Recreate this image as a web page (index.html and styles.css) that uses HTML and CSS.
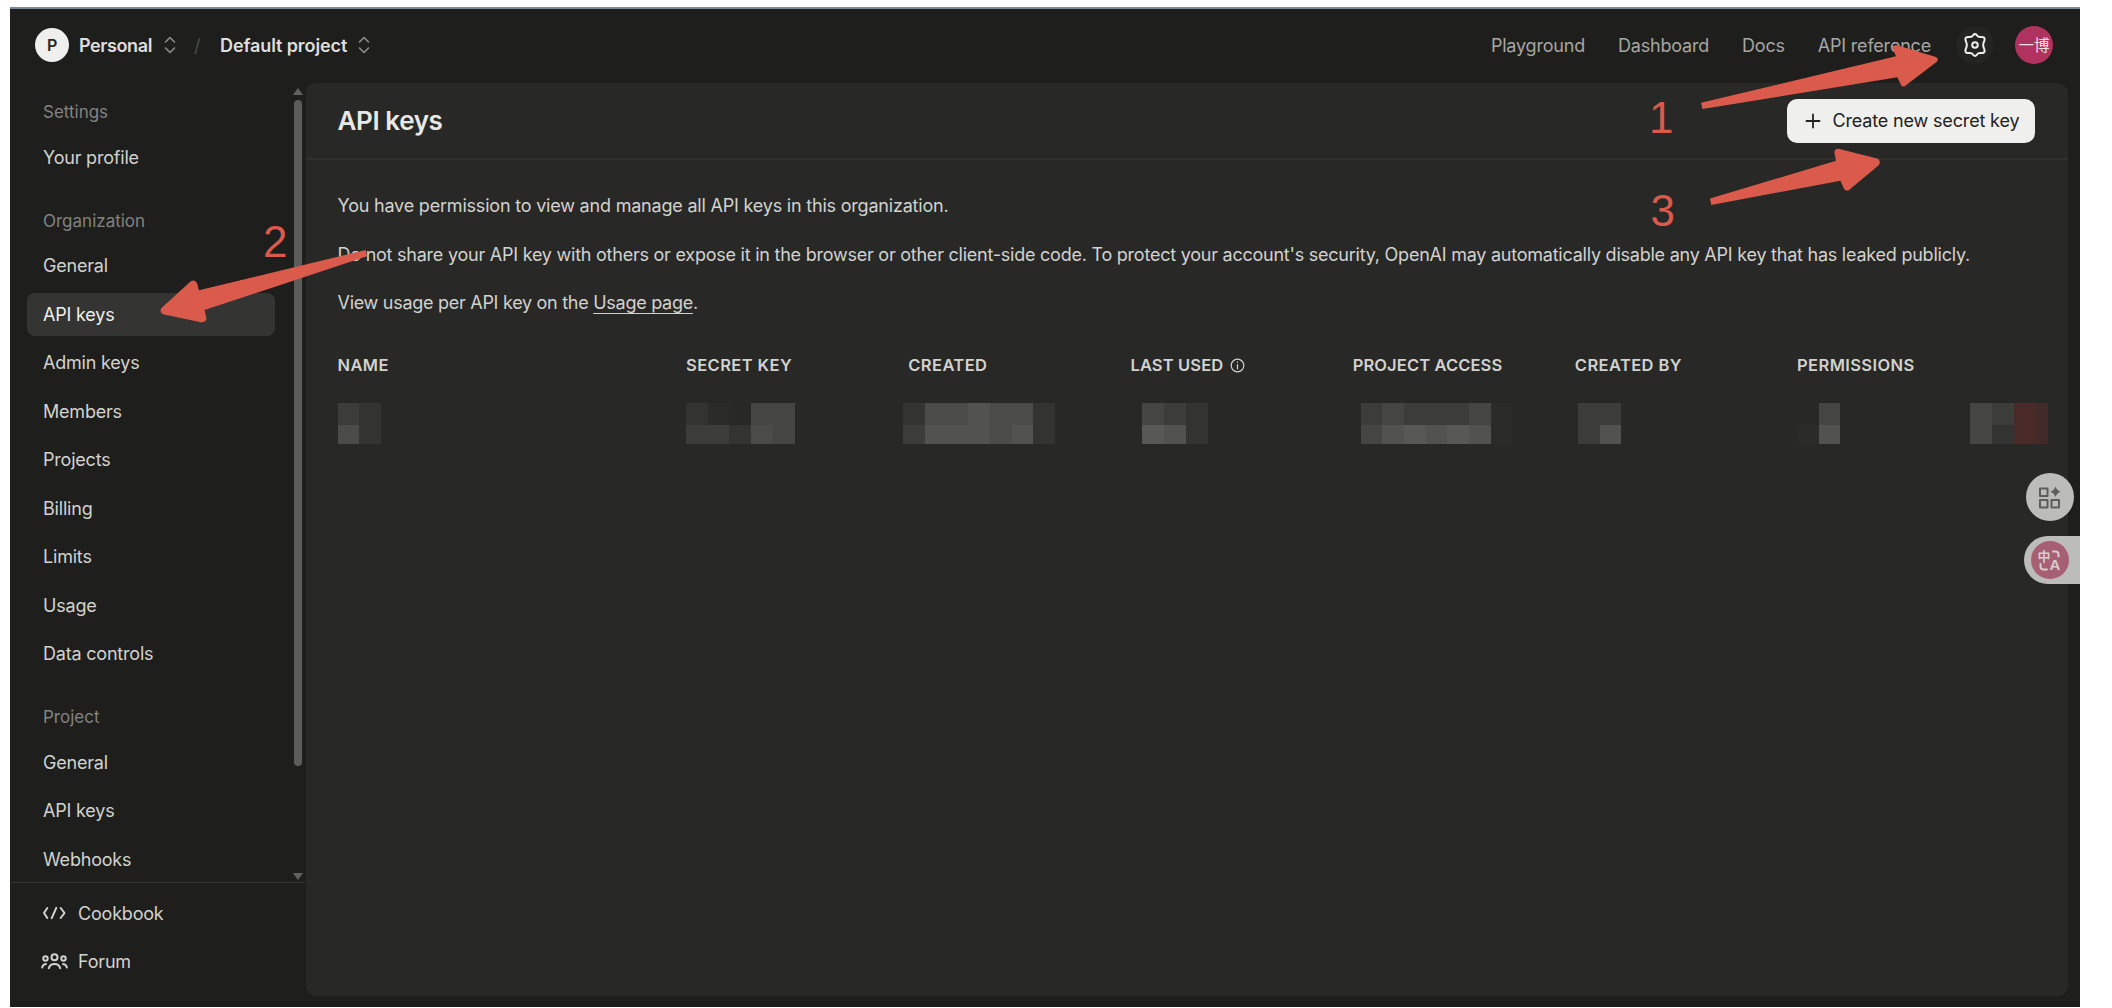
FILE: index.html
```
<!DOCTYPE html>
<html lang="en">
<head>
  <meta charset="UTF-8">
  <meta name="viewport" content="width=device-width, initial-scale=1.0">
  <title>API keys</title>
  <link rel="stylesheet" href="styles.css">
</head>
<body>
  <div class="app">
    <header class="topbar">
      <div class="org-avatar">P</div>
      <span class="crumb personal">Personal</span>
      <svg class="updown" width="12" height="18" viewBox="0 0 12 18"><path d="M1.500 6 6 1.500 10.500 6M1.500 12 6 16.500 10.500 12"/></svg>
      <span class="slash">/</span>
      <span class="crumb project">Default project</span>
      <svg class="updown" width="12" height="18" viewBox="0 0 12 18"><path d="M1.500 6 6 1.500 10.500 6M1.500 12 6 16.500 10.500 12"/></svg>
      <nav class="topnav">
        <a>Playground</a>
        <a>Dashboard</a>
        <a>Docs</a>
        <a>API reference</a>
      </nav>
      <div class="gear">
        <svg width="26" height="26" viewBox="0 0 26 26"><path d="M11.200 3.200Q13 1 14.800 3.200Q16.300 5.400 18.800 5Q22.800 4.600 22.600 7.500C22.500 9.500 21 10.800 21.200 13C21 15.200 22.500 16.500 22.600 18.500Q22.800 21.400 18.800 21Q16.300 20.600 14.800 22.800Q13 25 11.200 22.800Q9.700 20.600 7.200 21Q3.200 21.400 3.400 18.500C3.500 16.500 5 15.200 4.800 13C5 10.800 3.500 9.500 3.400 7.500Q3.200 4.600 7.200 5Q9.700 5.400 11.200 3.200Z"/><circle cx="13" cy="13" r="2.800"/></svg>
      </div>
      <div class="user-avatar">一博</div>
    </header>

    <div class="body">
      <aside class="sidebar">
        <div class="menu">
          <h4>Settings</h4>
          <a>Your profile</a>
          <h4>Organization</h4>
          <a>General</a>
          <a class="active">API keys</a>
          <a>Admin keys</a>
          <a>Members</a>
          <a>Projects</a>
          <a>Billing</a>
          <a>Limits</a>
          <a>Usage</a>
          <a>Data controls</a>
          <h4>Project</h4>
          <a>General</a>
          <a>API keys</a>
          <a>Webhooks</a>
        </div>
        <div class="scrollbar">
          <i class="up"></i>
          <i class="thumb"></i>
          <i class="down"></i>
        </div>
        <div class="links">
          <a>
            <svg width="28" height="20" viewBox="0 0 28 20"><path d="M7.300 5 4 10 7.300 15M16.300 4.800 11.700 15.200M20.700 5 24.500 10 20.700 15"/></svg>
            <span>Cookbook</span>
          </a>
          <a>
            <svg width="28" height="20" viewBox="0 0 28 20"><circle cx="14.500" cy="5.300" r="3"/><circle cx="5.500" cy="6.500" r="2.200"/><circle cx="23.500" cy="6.500" r="2.200"/><path d="M8.800 16.200Q10 12 14.500 12T20.200 16.200M2.200 15.500Q2.500 12.500 6 12M26.800 15.500Q26.500 12.500 23 12"/></svg>
            <span>Forum</span>
          </a>
        </div>
      </aside>

      <main class="panel">
        <div class="panel-head">
          <h1>API keys</h1>
          <button class="create">
            <svg width="16" height="16" viewBox="0 0 16 16"><path d="M8 1.500v13M1.500 8h13"/></svg>
            <span>Create new secret key</span>
          </button>
        </div>
        <div class="content">
          <p>You have permission to view and manage all API keys in this organization.</p>
          <p class="warn">Do not share your API key with others or expose it in the browser or other client-side code. To protect your account's security, OpenAI may automatically disable any API key that has leaked publicly.</p>
          <p class="view">View usage per API key on the <a class="usage">Usage page</a>.</p>

          <div class="row head">
            <span>NAME</span>
            <span>SECRET KEY</span>
            <span>CREATED</span>
            <span class="last">LAST USED <svg width="15" height="15" viewBox="0 0 15 15"><circle cx="7.500" cy="7.500" r="6.300"/><path d="M7.500 6.500v4.500M7.500 4v.3"/></svg></span>
            <span class="last">PROJECT ACCESS</span>
            <span>CREATED BY</span>
            <span>PERMISSIONS</span>
            <span></span>
          </div>
          <!-- masked key: each pair of cells is one column, top then bottom -->
          <div class="row masked">
            <div class="mosaic"><i class="c3"></i><i class="c5"></i><i class="c2"></i><i class="c2"></i></div>
            <div class="mosaic"><i class="c2"></i><i class="c3"></i><i class="c1"></i><i class="c3"></i><i></i><i class="c2"></i><i class="c4"></i><i class="c5"></i><i class="c4"></i><i class="c4"></i></div>
            <div class="mosaic created"><i class="c2"></i><i class="c3"></i><i class="c5"></i><i class="c6"></i><i class="c5"></i><i class="c6"></i><i class="c6"></i><i class="c6"></i><i class="c5"></i><i class="c5"></i><i class="c5"></i><i class="c6"></i><i class="c2"></i><i class="c2"></i></div>
            <div class="mosaic used"><i class="c4"></i><i class="c7"></i><i class="c3"></i><i class="c6"></i><i class="c2"></i><i class="c2"></i></div>
            <div class="mosaic access"><i class="c3"></i><i class="c4"></i><i class="c4"></i><i class="c6"></i><i class="c3"></i><i class="c7"></i><i class="c3"></i><i class="c6"></i><i class="c3"></i><i class="c7"></i><i class="c4"></i><i class="c6"></i><i class="c1"></i><i class="c1"></i></div>
            <div class="mosaic by"><i class="c3"></i><i class="c3"></i><i class="c3"></i><i class="c6"></i></div>
            <div class="mosaic"><i></i><i class="c1"></i><i class="c4"></i><i class="c6"></i></div>
            <div class="mosaic actions"><i class="c4"></i><i class="c4"></i><i class="c3"></i><i class="c2"></i><i class="r1"></i><i class="r1"></i><i class="r2"></i><i class="r2"></i></div>
          </div>
        </div>
      </main>
    </div>
  </div>

  <div class="float-grid">
    <svg width="24" height="24" viewBox="0 0 24 24"><rect x="2" y="3.500" width="7.500" height="7.500"/><rect x="2" y="15" width="7.500" height="7.500"/><rect x="13.500" y="15" width="7.500" height="7.500"/><path class="star" d="M17.500 1.500Q18.700 5.600 22.800 6.800Q18.700 8 17.500 12.100Q16.300 8 12.200 6.800Q16.300 5.600 17.500 1.500Z"/></svg>
  </div>
  <div class="float-translate">
    <div class="translate-icon">
      <svg width="38" height="38" viewBox="0 0 38 38">
        <path d="M22 10.500h2.500q3 0 3 3v2M9.500 23v2.500q0 3 3 3H16"/>
        <text x="6.500" y="19.500" font-size="13">中</text>
        <text x="18.500" y="29" font-size="15">A</text>
      </svg>
    </div>
  </div>

  <!-- numbered step arrows -->
  <svg class="steps" width="2112" height="1008" viewBox="0 0 2112 1008">
    <path d="M1701 102.800 1896 56.200 1892.500 48.500Q1893 44.500 1897 45.300L1936 57Q1939.500 59 1936.500 62L1905 86Q1902.500 87.500 1901 85L1897.400 77.300 1702.400 109Z"/>
    <path d="M1710 198.500 1836 160.800 1834.300 152Q1835.500 148 1839.500 149L1878 158.800Q1881 161 1879 165L1849 190Q1846 191.500 1844 189L1840.500 180.700 1711.300 205Z"/>
    <path d="M365.700 250 199 290.300 197 283Q194 279 190.500 281.500L161.500 308Q159 312 163 314.300L201 322.300Q205.500 322.600 206.500 318.500L204.500 310 367 256.300Z"/>
    <text x="1649" y="133">1</text>
    <text x="263" y="257">2</text>
    <text x="1650.500" y="226">3</text>
  </svg>
</body>
</html>
```
FILE: styles.css
```
* {
  box-sizing: border-box;
}

body {
  margin: 0;
  padding: 7px 32px 1px 10px;
  height: 1008px;
  overflow: hidden;
  background: #fff;
  color: #d2d2d0;
  font-family: Inter, "Liberation Sans", "Noto Sans CJK SC", sans-serif;
  font-size: 18px;
  letter-spacing: -0.2px;
}

svg {
  display: block;
  fill: none;
  stroke: currentColor;
  stroke-width: 2;
  stroke-linecap: round;
  stroke-linejoin: round;
}

.app {
  height: 1000px;
  display: flex;
  flex-direction: column;
  background: #1e1e1c;
  border-top: 2px solid #7b8797;
}

/* top bar */
.topbar {
  display: flex;
  align-items: center;
  height: 74px;
  padding: 0 27px 2px 25px;
}

.org-avatar {
  width: 34px;
  height: 34px;
  border-radius: 50%;
  background: #efefed;
  color: #2a2a28;
  font-size: 16px;
  font-weight: 600;
  line-height: 34px;
  text-align: center;
  margin-right: 10px;
}

.crumb {
  font-weight: 600;
  color: #dededc;
}

.personal {
  width: 85px;
  letter-spacing: -0.4px;
}

.project {
  width: 138px;
  letter-spacing: -0.1px;
}

.updown {
  color: #8c8c8a;
  stroke-width: 1.6;
}

.slash {
  width: 44px;
  padding-left: 18px;
  color: #4a4a48;
}

.topnav {
  display: flex;
  gap: 33px;
  margin-left: auto;
  margin-right: 25px;
  color: #a6a6a4;
  letter-spacing: -0.2px;
}

.gear {
  display: flex;
  align-items: center;
  justify-content: center;
  width: 38px;
  height: 38px;
  border-radius: 50%;
  background: #242422;
  color: #efefed;
  margin-right: 21px;
}

.user-avatar {
  width: 38px;
  height: 38px;
  border-radius: 50%;
  background: #b0335f;
  color: #f0dfe5;
  font-family: "Noto Sans CJK SC", sans-serif;
  font-size: 15.5px;
  line-height: 37px;
  letter-spacing: 0;
  text-align: center;
}

.body {
  flex: 1;
  display: flex;
  min-height: 0;
}

/* sidebar */
.sidebar {
  width: 296px;
  display: grid;
  grid-template-columns: 1fr 14px;
  grid-template-rows: 799px 1fr;
}

.menu {
  padding: 9px 17px 0 17px;
}

.menu h4 {
  margin: 22px 0 0;
  padding-left: 16px;
  height: 41px;
  line-height: 41px;
  font-size: 17px;
  font-weight: 400;
  letter-spacing: 0;
  color: #838381;
}

.menu h4:first-child {
  margin-top: 0;
}

.menu a {
  display: block;
  height: 43px;
  line-height: 43px;
  margin: 2.5px 0 5.5px;
  padding-left: 16px;
  border-radius: 8px;
}

.menu a + a {
  margin-top: 0;
}

.menu .active {
  background: #343432;
  color: #efefed;
}

.scrollbar {
  display: flex;
  flex-direction: column;
  align-items: center;
  width: 10px;
  margin-left: 1px;
  padding: 5px 0 2px;
}

.up,
.down {
  border: 5px solid transparent;
}

.up {
  border-top: 0;
  border-bottom: 7px solid #636361;
}

.down {
  border-bottom: 0;
  border-top: 7px solid #636361;
  margin-top: auto;
}

.thumb {
  width: 8px;
  height: 666px;
  margin-top: 5px;
  border-radius: 4px;
  background: #5c5c5a;
}

.links {
  grid-column: span 2;
  margin-right: 1px;
  padding-top: 6px;
  border-top: 1px solid #343432;
}

.links a {
  display: flex;
  align-items: center;
  gap: 10px;
  height: 48.5px;
  padding-left: 30px;
}

/* main panel */
.panel {
  width: 1762px;
  height: 913px;
  border-radius: 10px;
  background: #282826;
}

.panel-head {
  display: flex;
  align-items: center;
  justify-content: space-between;
  height: 77px;
  padding: 0 33px 0 31.5px;
  border-bottom: 2px solid #30302e;
}

h1 {
  margin: 0;
  font-size: 26px;
  font-weight: 600;
  letter-spacing: -0.4px;
  color: #e8e8e6;
}

.create {
  display: flex;
  align-items: center;
  gap: 12px;
  width: 248px;
  height: 44px;
  padding: 0 0 0 17.5px;
  border: 0;
  border-radius: 10px;
  background: #efefed;
  color: #222220;
  font: inherit;
  letter-spacing: -0.16px;
  white-space: nowrap;
}

.create svg {
  stroke-width: 1.8;
}

.content {
  padding: 22px 0 0 31.5px;
}

p {
  margin: 0;
  line-height: 48.5px;
  white-space: nowrap;
}

.warn {
  letter-spacing: -0.236px;
}

.view {
  letter-spacing: -0.28px;
}

.usage {
  text-decoration: underline;
  text-decoration-thickness: 1px;
  text-underline-offset: 4px;
}

.row {
  display: grid;
  grid-template-columns: 348.6px repeat(5, 222.2px) 172.5px 1fr;
}

.head {
  margin-top: 25.5px;
  height: 24px;
  line-height: 24px;
  font-size: 16.5px;
  font-weight: 600;
  letter-spacing: 0.4px;
  white-space: nowrap;
}

.head .last {
  letter-spacing: 0.12px;
}

.head span {
  display: flex;
  align-items: center;
  gap: 7px;
}

.head svg {
  stroke-width: 1.2;
}

.masked {
  margin-top: 26px;
}

.mosaic {
  display: grid;
  grid-auto-flow: column;
  grid-template-rows: 22px 19px;
  grid-auto-columns: 21.7px;
}

.created {
  margin-left: -5px;
}

.used {
  margin-left: 12px;
}

.access {
  margin-left: 8px;
}

.by {
  margin-left: 3px;
}

.actions {
  grid-template-columns: 22px 22px 22px 12px;
}

.c1 { background: #2b2b29; }
.c2 { background: #333331; }
.c3 { background: #3c3c3a; }
.c4 { background: #454543; }
.c5 { background: #4b4b49; }
.c6 { background: #525250; }
.c7 { background: #585856; }
.r1 { background: #4a2a28; }
.r2 { background: #412a28; }

/* floating extension buttons */
.float-grid {
  position: absolute;
  top: 473px;
  left: 2026px;
  display: flex;
  align-items: center;
  justify-content: center;
  width: 48px;
  height: 48px;
  border-radius: 50%;
  background: #bcbcba;
  color: #5d5d5d;
}

.star {
  fill: currentColor;
  stroke: none;
}

.float-translate {
  position: absolute;
  top: 536px;
  left: 2024px;
  width: 56px;
  height: 48px;
  padding: 5px 7px;
  border-radius: 24px 0 0 24px;
  background: #bcbcba;
}

.translate-icon {
  width: 38px;
  height: 38px;
  border-radius: 50%;
  background: #a75f72;
  color: #d5cdcf;
}

.translate-icon text {
  fill: currentColor;
  stroke: none;
  font-family: "Liberation Sans", "Noto Sans CJK SC", sans-serif;
  font-weight: 700;
}

/* annotation overlay */
.steps {
  position: absolute;
  top: 0;
  left: 0;
  fill: #da5a4c;
  stroke: none;
  pointer-events: none;
}

.steps text {
  font-family: "Liberation Sans", sans-serif;
  font-size: 44px;
  letter-spacing: 0;
}
```
